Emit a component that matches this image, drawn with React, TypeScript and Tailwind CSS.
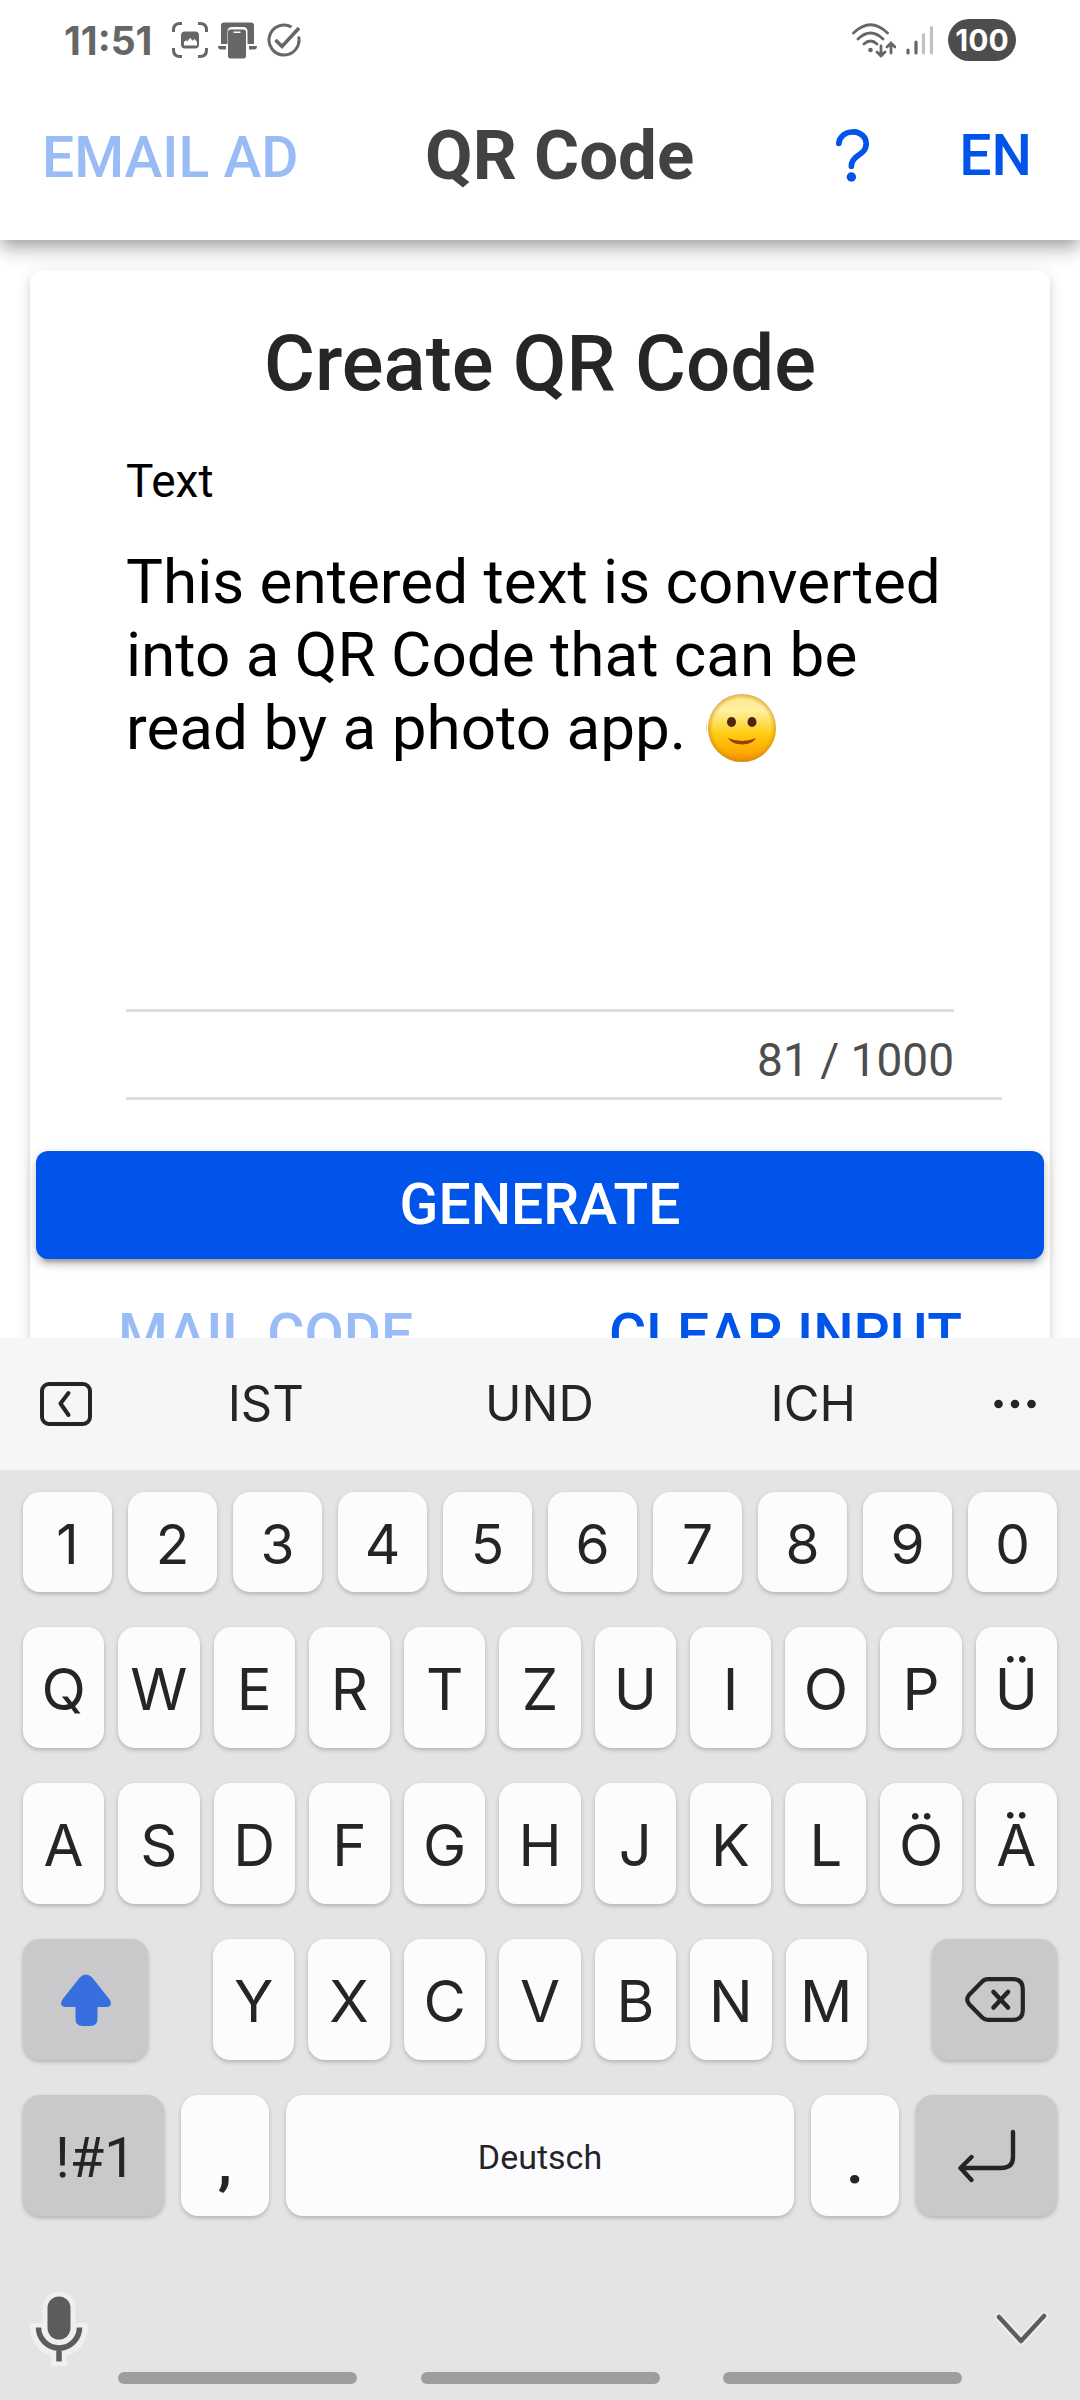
import { useState } from "react";

const DIGITS = ["1", "2", "3", "4", "5", "6", "7", "8", "9", "0"];
const ROW_TOP = ["Q", "W", "E", "R", "T", "Z", "U", "I", "O", "P", "Ü"];
const ROW_HOME = ["A", "S", "D", "F", "G", "H", "J", "K", "L", "Ö", "Ä"];
const ROW_BOTTOM = ["Y", "X", "C", "V", "B", "N", "M"];
const SUGGESTIONS = ["IST", "UND", "ICH"];

const KEY =
  "flex items-center justify-center rounded-[17px] text-[#252527] shadow-[0_2px_4px_rgba(0,0,0,0.22)]";
const LIGHT_KEY = `${KEY} bg-[#fcfcfe]`;
const DARK_KEY = `${KEY} bg-[#c9c9cb]`;

function ScreenshotIcon() {
  return (
    <svg width="36" height="36" viewBox="0 0 36 36" fill="none" stroke="#666" strokeWidth="3">
      <path d="M1.5 10V8Q1.5 1.5 8 1.5H10M26 1.5h2Q34.500 1.500 34.500 8v2M34.500 26v2q0 6.500-6.500 6.500h-2M10 34.500H8Q1.500 34.500 1.500 28v-2" />
      <path
        fillRule="evenodd"
        clipRule="evenodd"
        fill="#666"
        stroke="none"
        d="M13 9.500h10q4 0 4 4v9q0 4-4 4H13q-4 0-4-4v-9q0-4 4-4ZM12 20v3.500h13V20l-2.500-3-2 1.700-2.300-3-2.700 3.500-1.500-1Z"
      />
    </svg>
  );
}

function DevicesIcon() {
  return (
    <svg width="39" height="37" viewBox="0 0 39 37" fill="#666">
      <path d="M6 .5h27q3 0 3 3V22h-6.500V9.500Q29.500 5 25 5H14q-4.500 0-4.500 4.500V22H3V3.500q0-3 3-3Z" />
      <path d="M0 24h8v3.500H3Q0 27.500 0 24ZM31 24h8q0 3.500-3 3.500h-5Z" />
      <path
        fillRule="evenodd"
        d="M12.500 7.500h13q2.500 0 2.500 2.500v24q0 2.500-2.500 2.500h-13Q10 36.500 10 34V10q0-2.500 2.500-2.500ZM15.500 9.500V11h7V9.500Z"
      />
    </svg>
  );
}

function CheckIcon() {
  return (
    <svg width="34" height="34" viewBox="0 0 34 34" fill="none" stroke="#666" strokeWidth="3">
      <path d="M24.500 4A15 15 0 1 0 31.600 13.500" />
      <path d="m8.500 17 6.500 6.500L32 5" strokeWidth="3.600" />
    </svg>
  );
}

function WifiIcon() {
  return (
    <svg width="44" height="35" viewBox="0 0 44 35" fill="none" stroke="#666" strokeLinecap="round" strokeWidth="2.800">
      <path d="M1.500 10Q18.500-6.500 35.500 10M6 16q12.500-12 25 0M12 21q6.500-6 13 0" />
      <circle cx="18.500" cy="27" r="2.300" fill="#666" stroke="none" />
      <path d="M29 23v10m-4-4 4 4 4-4M39 30V20m-4 4 4-4 4 4" />
    </svg>
  );
}

function SignalIcon() {
  return (
    <svg width="28" height="31" viewBox="0 0 28 31" fill="none" strokeLinecap="round" strokeWidth="3.200">
      <path d="M2 25v3M10 17v11" stroke="#666" />
      <path d="M17.500 9.500V28M25.500 2.500V28" stroke="#c2c2c2" />
    </svg>
  );
}

function HelpIcon() {
  return (
    <svg width="73" height="73" viewBox="0 0 512 512" fill="none">
      <path
        d="M160 164s1.440-33 33.540-59.460C212.600 88.830 235.490 84.280 256 84c18.730-.230 35.470 2.940 45.480 7.820C318.590 100.200 352 120.600 352 164c0 45.670-29.180 66.370-62.350 89.180S248 298.360 248 324"
        stroke="#0054e9"
        strokeWidth="40"
        strokeLinecap="round"
      />
      <circle cx="248" cy="400" r="33" fill="#0054e9" />
    </svg>
  );
}

function Smiley() {
  return (
    <svg width="70" height="70" viewBox="0 0 70 70">
      <defs>
        <linearGradient id="face" x1="0" y1="0" x2="0" y2="1">
          <stop offset="0" stopColor="#fde68a" />
          <stop offset="0.250" stopColor="#fff0a0" />
          <stop offset="0.600" stopColor="#ffcb10" />
          <stop offset="0.850" stopColor="#fdaa05" />
          <stop offset="1" stopColor="#f08a05" />
        </linearGradient>
        <radialGradient id="rim">
          <stop offset="0.850" stopColor="#d98a00" stopOpacity="0" />
          <stop offset="1" stopColor="#c98a20" stopOpacity="0.600" />
        </radialGradient>
      </defs>
      <circle cx="35" cy="35" r="34" fill="url(#face)" />
      <circle cx="35" cy="35" r="34" fill="url(#rim)" />
      <ellipse cx="24.500" cy="29" rx="4.500" ry="5" fill="#51260f" />
      <ellipse cx="45" cy="29" rx="4.500" ry="5" fill="#51260f" />
      <path d="M21 45q14 6 28 0-4 6.500-14 6.500T21 45Z" fill="#9a3d08" />
    </svg>
  );
}

function CollapseIcon() {
  return (
    <svg width="52" height="44" viewBox="0 0 52 44" fill="none" stroke="#252527" strokeWidth="4">
      <rect x="2" y="2" width="48" height="40" rx="7" />
      <path d="m28.500 11-8 10.500 8 11.500" strokeLinecap="round" strokeLinejoin="round" />
    </svg>
  );
}

function MoreIcon() {
  return (
    <svg width="44" height="10" viewBox="0 0 44 10" fill="#252527">
      <circle cx="5.500" cy="5" r="4.300" />
      <circle cx="22" cy="5" r="4.300" />
      <circle cx="38.500" cy="5" r="4.300" />
    </svg>
  );
}

function ShiftIcon() {
  return (
    <svg width="50" height="52" viewBox="0 0 50 52" fill="#376fdf">
      <path d="M20 2.500Q25-1.500 30 2.500q1 1 2 2L49 26q3 7-4 7h-8.500v12q0 7-7 7h-8q-7 0-7-7V33H5q-7 0-4-7L18 4.500q1-1 2-2Z" />
    </svg>
  );
}

function BackspaceIcon() {
  return (
    <svg
      width="60"
      height="45"
      viewBox="0 0 60 45"
      fill="none"
      stroke="#252527"
      strokeWidth="4.200"
      strokeLinecap="round"
      strokeLinejoin="round"
    >
      <path d="M23 2.200h25Q57.800 2.200 57.800 12v21q0 9.800-9.800 9.800H23q-3.500 0-6-2.500L4 27q-3.500-4.500 0-9L17 4.700q2.500-2.500 6-2.500Z" />
      <path d="m28.500 15 14.500 15.500M43 15 28.500 30.500" strokeWidth="4.600" />
    </svg>
  );
}

function EnterIcon() {
  return (
    <svg
      width="58"
      height="54"
      viewBox="0 0 58 54"
      fill="none"
      stroke="#252527"
      strokeWidth="4.400"
      strokeLinecap="round"
      strokeLinejoin="round"
    >
      <path d="M55 3v25q0 11-12 11H3.500M13.500 28 2.500 39l11 12" />
    </svg>
  );
}

function MicIcon() {
  return (
    <svg width="58" height="76" viewBox="0 0 58 76" fill="none">
      <g stroke="#efeff0">
        <path d="M29 17v20" strokeWidth="33" strokeLinecap="round" />
        <path d="M8.500 32v5a20.500 20.500 0 0 0 41 0v-5" strokeWidth="17" />
        <path d="M29 58v17" strokeWidth="16" />
      </g>
      <path d="M29 17v20" stroke="#5c5c5c" strokeWidth="23" strokeLinecap="round" />
      <path d="M8.500 36.500a20.500 20.500 0 0 0 41 0M29 57v13.500" stroke="#5c5c5c" strokeWidth="5.500" />
    </svg>
  );
}

function ChevronDownIcon() {
  return (
    <svg width="54" height="36" viewBox="0 0 54 36" fill="none" strokeLinecap="round" strokeLinejoin="round">
      <path d="m5 6 22 24L50 5" stroke="#efeff0" strokeWidth="8" />
      <path d="m5 6 22 24L50 5" stroke="#5c5c5c" strokeWidth="4.500" />
    </svg>
  );
}

function StatusBar() {
  return (
    <div className="flex h-20 items-center justify-between px-16 font-['Inter',sans-serif]">
      <div className="flex items-center gap-[10px]">
        <span className="mr-[10px] text-[39px] leading-none font-bold text-[#666]">11:51</span>
        <ScreenshotIcon />
        <DevicesIcon />
        <CheckIcon />
      </div>
      <div className="flex items-center gap-[10px]">
        <WifiIcon />
        <SignalIcon />
        <span className="ml-1 flex h-[42px] w-[68px] items-center justify-center rounded-full bg-[#4d4d4d] text-[30px] leading-none font-bold text-white">
          100
        </span>
      </div>
    </div>
  );
}

function Header() {
  return (
    <header className="relative z-10 bg-white shadow-[0_6px_12px_-3px_rgba(0,0,0,0.2),0_12px_15px_0_rgba(0,0,0,0.14),0_3px_30px_0_rgba(0,0,0,0.12)]">
      <StatusBar />
      <div className="flex h-40 items-center pr-12 pb-2 pl-[42px] font-medium">
        <button disabled className="w-[261px] pt-1 text-left text-[57px] whitespace-nowrap text-[#99bbf6]">
          EMAIL AD
        </button>
        <h1 className="flex-1 text-center text-[69px] font-bold whitespace-nowrap text-[#424242]">QR Code</h1>
        <button aria-label="Help" className="shrink-0">
          <HelpIcon />
        </button>
        <button className="ml-[70px] text-[57px] text-[#0054e9]">EN</button>
      </div>
    </header>
  );
}

function QrForm() {
  const [text, setText] = useState(
    "This entered text is converted into a QR Code that can be read by a photo app. 🙂"
  );
  return (
    <section className="mx-[30px] mt-[30px] rounded-xl bg-white pt-12 pb-12 shadow-[0_9px_3px_-6px_rgba(0,0,0,0.2),0_6px_6px_0_rgba(0,0,0,0.1),0_3px_15px_0_rgba(0,0,0,0.12)]">
      <h2 className="text-center text-[78px] leading-[92px] font-medium text-[#262626]">Create QR Code</h2>
      <div className="mt-11 mr-12 ml-24 border-b-3 border-[#dedede] pr-12 pb-2 text-black">
        <label htmlFor="qr-text" className="block text-[46px] leading-[54px]">
          Text
        </label>
        <div className="relative mt-[37px]">
          <textarea
            id="qr-text"
            value={text}
            onChange={(event) => setText(event.target.value)}
            className="block h-[467px] w-full resize-none border-b-3 border-[#dedede] bg-transparent text-[62px] leading-[73px] outline-none"
          />
          <span aria-hidden="true" className="pointer-events-none absolute top-[148px] left-[581px] bg-white">
            <Smiley />
          </span>
        </div>
        <div className="mt-5 text-right text-[46px] leading-[57px] text-[#4d4d4d]">81 / 1000</div>
      </div>
      <div className="mt-[51px] px-[6px]">
        <button className="h-[108px] w-full rounded-xl bg-[#0054e9] text-[57px] font-medium text-white shadow-[0_9px_3px_-6px_rgba(0,0,0,0.2),0_6px_6px_0_rgba(0,0,0,0.14),0_3px_15px_0_rgba(0,0,0,0.12)]">
          GENERATE
        </button>
      </div>
      <div className="mt-[22px] flex h-[108px] items-center justify-between px-[88px] text-[57px] font-medium">
        <button disabled className="text-[#99bbf6]">
          MAIL CODE
        </button>
        <button className="text-[#0054e9]">CLEAR INPUT</button>
      </div>
    </section>
  );
}

function Keyboard() {
  return (
    <div className="relative z-20 shrink-0 bg-[#e4e4e6] font-['Inter',sans-serif]">
      <div className="flex h-[132px] items-center bg-[#f5f6f8] pr-[43px] pl-10 text-[49px] text-[#252527]">
        <button aria-label="Collapse toolbar">
          <CollapseIcon />
        </button>
        <div className="mr-[43px] ml-[37px] grid flex-1 grid-cols-3">
          {SUGGESTIONS.map((word) => (
            <button key={word}>{word}</button>
          ))}
        </div>
        <button aria-label="More">
          <MoreIcon />
        </button>
      </div>

      <div className="flex flex-col gap-[35px] px-[23px] pt-[22px] text-[58px]">
        <div className="grid grid-cols-10 gap-4 text-[55px]">
          {DIGITS.map((key) => (
            <button key={key} className={`${LIGHT_KEY} h-[100px] pt-1`}>
              {key}
            </button>
          ))}
        </div>
        <div className="grid grid-cols-11 gap-[14px]">
          {ROW_TOP.map((key) => (
            <button key={key} className={`${LIGHT_KEY} h-[121px] pt-1`}>
              {key}
            </button>
          ))}
        </div>
        <div className="grid grid-cols-11 gap-[14px]">
          {ROW_HOME.map((key) => (
            <button key={key} className={`${LIGHT_KEY} h-[121px] pt-1`}>
              {key}
            </button>
          ))}
        </div>
        <div className="flex h-[121px]">
          <button aria-label="Shift" className={`${DARK_KEY} w-[125px]`}>
            <ShiftIcon />
          </button>
          <div className="mx-[65px] grid flex-1 grid-cols-7 gap-[14px]">
            {ROW_BOTTOM.map((key) => (
              <button key={key} className={`${LIGHT_KEY} pt-1`}>
                {key}
              </button>
            ))}
          </div>
          <button aria-label="Backspace" className={`${DARK_KEY} w-[125px]`}>
            <BackspaceIcon />
          </button>
        </div>
        <div className="flex h-[121px] gap-[17px] font-['Roboto',sans-serif]">
          <button className={`${DARK_KEY} w-[141px] pt-1 pl-1 text-[56px]`}>!#1</button>
          <button className={`${LIGHT_KEY} w-[88px] pt-4 font-bold`}>,</button>
          <button className={`${LIGHT_KEY} flex-1 pt-1 text-[34px]`}>Deutsch</button>
          <button className={`${LIGHT_KEY} w-[88px] pt-4 font-bold`}>.</button>
          <button aria-label="Enter" className={`${DARK_KEY} w-[141px]`}>
            <EnterIcon />
          </button>
        </div>
      </div>

      <div className="flex items-center justify-between pt-[75px] pr-8 pl-[30px]">
        <button aria-label="Voice input">
          <MicIcon />
        </button>
        <button aria-label="Hide keyboard">
          <ChevronDownIcon />
        </button>
      </div>
      <div className="mt-[5px] flex justify-between px-[118px] pb-4">
        <span className="h-3 w-[239px] rounded-full bg-[#9d9d9f]" />
        <span className="h-3 w-[239px] rounded-full bg-[#9d9d9f]" />
        <span className="h-3 w-[239px] rounded-full bg-[#9d9d9f]" />
      </div>
    </div>
  );
}

export default function App() {
  return (
    <div className="flex h-screen flex-col overflow-hidden bg-white font-['Roboto',sans-serif]">
      <Header />
      <main className="min-h-0 flex-1 overflow-hidden">
        <QrForm />
      </main>
      <Keyboard />
    </div>
  );
}
